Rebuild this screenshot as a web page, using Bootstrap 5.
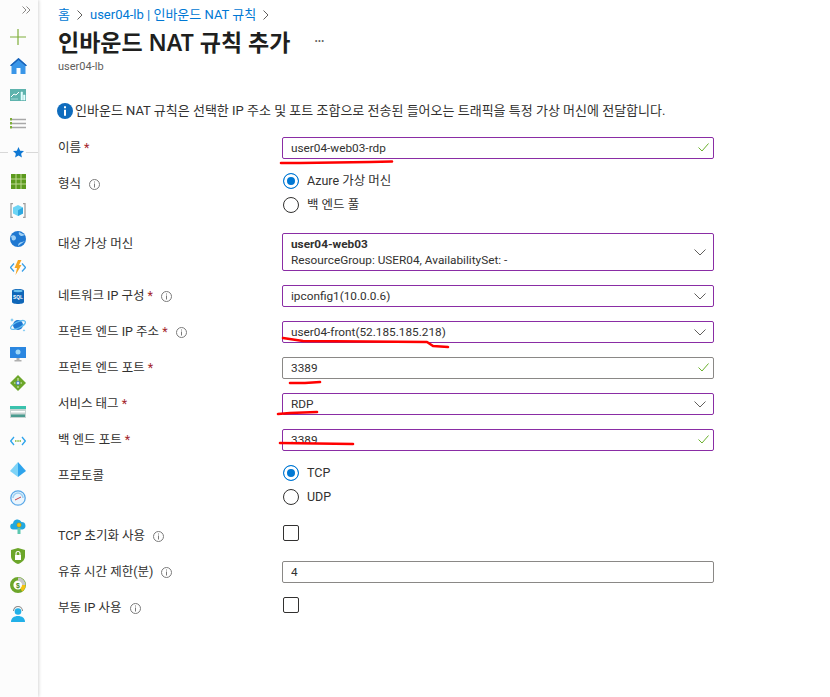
<!DOCTYPE html>
<html lang="ko">
  <head>
    <meta charset="UTF-8" />
    <title>인바운드 NAT 규칙 추가</title>
    <link href="https://cdn.jsdelivr.net/npm/bootstrap@5.3.0/dist/css/bootstrap.min.css" rel="stylesheet" />
    <style>
      body {
        background: #fff;
        color: #323130;
        font-family: Roboto, "Noto Sans CJK KR", sans-serif;
        font-size: 12.5px;
        overflow: hidden;
      }
      .page-wrap { height: 697px; }
      .side-rail {
        width: 38px;
        flex: none;
        background: #fcfcfc;
        box-shadow: 1px 0 3px rgba(0, 0, 0, 0.16);
        padding-right: 2px;
      }
      .rail-top { height: 23px; width: 100%; padding: 0 0 3px 16px; }
      .rail-item { height: 28.8px; }
      .rail-sep { position: relative; }
      .rail-sep::before, .rail-sep::after {
        content: "";
        position: absolute;
        top: 14px;
        height: 1px;
        width: 8px;
        background: #d8d8d8;
      }
      .rail-sep::before { left: 0; }
      .rail-sep::after { right: -2px; width: 12px; }
      .main-pane { padding: 6px 0 0 20px; width: 676px; }
      .crumbs { height: 17px; line-height: 17px; color: #0078d4; font-size: 13px; }
      .crumbs svg { margin: 0 7px; }
      .page-title {
        font-size: 23px;
        font-weight: 600;
        line-height: 30px;
        margin: 4px 0 0;
        color: #201f1e;
        font-family: "Noto Sans", "Noto Sans CJK KR", sans-serif;
      }
      .more-dots { color: #605e5c; margin-left: 24px; font-size: 12px; letter-spacing: 0; }
      .sub-title { font-size: 11px; color: #605e5c; line-height: 15px; margin-top: 2px; }
      .info-line { margin: 28px 0 17px -1px; height: 18px; font-size: 13px; gap: 2px; }
      .form-line { display: flex; margin-bottom: 14px; }
      .form-line.tight { margin-bottom: 10px; }
      .form-line.loose { margin-bottom: 16px; }
      .line-label { width: 224px; flex: none; line-height: 22px; }
      .line-label.pushed { padding-top: 4px; }
      .line-label.top-set { line-height: 21px; padding-top: 0; }
      .req { color: #a4262c; }
      .tip-icon { margin-left: 5px; vertical-align: -2px; }
      .line-ctl { width: 432px; flex: none; position: relative; }
      .az-input.form-control, .az-select.form-select {
        height: 22px;
        min-height: 0;
        border-radius: 2px;
        border: 1px solid #8a2da5;
        font-size: 11.8px;
        color: #323130;
        padding: 0 8px;
        line-height: 20px;
        box-shadow: none;
      }
      .az-input.plain { border-color: #8a8886; }
      .az-select.form-select {
        background-image: url("data:image/svg+xml,%3Csvg xmlns='http://www.w3.org/2000/svg' width='12' height='7' viewBox='0 0 12 7'%3E%3Cpath d='M.5.5 6 6 11.5.5' fill='none' stroke='%23605e5c'/%3E%3C/svg%3E");
        background-position: right 7px center;
        background-size: 12px 7px;
      }
      .az-select.tall { height: 38px; line-height: 16px; padding-top: 2px; padding-bottom: 2px; }
      .ok-tick { position: absolute; right: 5px; top: 6px; }
      .radio-row { height: 24px; margin: 0; padding: 0; gap: 8px; }
      .az-radio.form-check-input, .az-check.form-check-input {
        width: 16px;
        height: 16px;
        margin: 0 0 0 1px;
        float: none;
        border: 1px solid #323130;
        background-color: #fff;
        flex: none;
      }
      .az-radio.form-check-input:checked[type="radio"] {
        background-image: none;
        background-color: #0078d4;
        border-color: #0078d4;
        box-shadow: inset 0 0 0 3px #fff;
      }
      .az-check.form-check-input { border-radius: 2px; margin-top: 0; display: block; }
      .ink-layer { position: absolute; left: 0; top: 0; pointer-events: none; }
    </style>
  </head>
  <body>
    <div class="page-wrap d-flex position-relative">
      <nav class="side-rail d-flex flex-column align-items-center">
        <div class="rail-top d-flex align-items-center justify-content-center">
          <svg width="9" height="8" viewBox="0 0 9 8" fill="none" stroke="#8a8886"><path d="M.5.5 4 4 .5 7.500M4.500.5 8 4 4.500 7.500" /></svg>
        </div>
        <div class="rail-item d-flex align-items-center justify-content-center">
          <svg width="16" height="16" viewBox="0 0 16 16"><path d="M8 0v16M0 8h16" stroke="#7fae3a" stroke-width="1.200" /></svg>
        </div>
        <div class="rail-item d-flex align-items-center justify-content-center">
          <svg width="17" height="16" viewBox="0 0 17 16"><path d="M8.500 0 17 7.500 15.500 8v8h-14V8L0 7.500z" fill="#3a96e8" /><path d="M8.500 0 17 7.500l-1.500.5-7-6-7 6L0 7.500z" fill="#1a62b8" /><path d="M6.500 10h4v6h-4z" fill="#fff" /></svg>
        </div>
        <div class="rail-item d-flex align-items-center justify-content-center">
          <svg width="16" height="12" viewBox="0 0 16 12"><path d="M0 0h16v12H0z" fill="#5eb3ad" /><path d="M1 8l3-3 2 1 3-3" fill="none" stroke="#fff" /><path d="M1 10h7M11 3h1.500v8H11zM13.500 6H15v5h-1.500z" fill="#dff" stroke="#eff" stroke-width=".5" /></svg>
        </div>
        <div class="rail-item d-flex align-items-center justify-content-center">
          <svg width="16" height="11" viewBox="0 0 16 11"><path d="M2 1.500h14M2 5.500h14M2 9.500h14" stroke="#a8a8a8" stroke-width="1.400" /><path d="M0 0h2v2.500H0zM0 4h2v2.500H0zM0 8h2v2.500H0z" fill="#7fae3a" /></svg>
        </div>
        <div class="rail-item rail-sep w-100 d-flex align-items-center justify-content-center">
          <svg width="11" height="11" viewBox="0 0 24 24"><path d="M12 0l3.600 8 8.400.9-6.300 5.700L19.500 23 12 18.700 4.500 23l1.800-8.400L0 8.900 8.400 8z" fill="#0f78d4" /></svg>
        </div>
        <div class="rail-item d-flex align-items-center justify-content-center">
          <svg width="15" height="15" viewBox="0 0 15 15"><path d="M0 0h15v15H0z" fill="#5c9a1e" /><path d="M0 5h15M0 10h15M5 0v15M10 0v15" stroke="#bcd890" /></svg>
        </div>
        <div class="rail-item d-flex align-items-center justify-content-center">
          <svg width="16" height="15" viewBox="0 0 16 15"><path d="M3 .7H1v13.600h2M13 .7h2v13.600h-2" fill="none" stroke="#a0a0a0" stroke-width="1.300" /><path d="M8 2l5 2.500v6L8 13l-5-2.500v-6z" fill="#6cd4f5" /><path d="M8 7.200V13l5-2.500v-6z" fill="#2ea8e0" /></svg>
        </div>
        <div class="rail-item d-flex align-items-center justify-content-center">
          <svg width="16" height="16" viewBox="0 0 16 16"><circle cx="8" cy="8" r="8" fill="#1f78d1" /><path d="M1 5c3-2 5 0 5 2s-2 3-4 2M9 1c-1 2 1 4 3 4l3-1M8 15c0-3 2-4 4-4l3-1" fill="#9fd0f5" /></svg>
        </div>
        <div class="rail-item d-flex align-items-center justify-content-center">
          <svg width="16" height="15" viewBox="0 0 16 15"><path d="M4 3.500 .5 7.500 4 11.500M12 3.500l3.500 4-3.500 4" fill="none" stroke="#3aa0e8" stroke-width="1.300" /><path d="M8 0h3.500L9 5h2.500l-6 10L7 8H4.500z" fill="#f5a623" /></svg>
        </div>
        <div class="rail-item d-flex align-items-center justify-content-center">
          <svg width="12" height="15" viewBox="0 0 12 15"><path d="M0 2c0-2.600 12-2.600 12 0v11c0 2.600-12 2.600-12 0z" fill="#0f66b8" /><ellipse cx="6" cy="2" rx="4.600" ry="1.200" fill="#6cc0ee" /><text x="6" y="10" text-anchor="middle" font-size="4.800" font-weight="700" fill="#fff" font-family="Liberation Sans, sans-serif">SQL</text></svg>
        </div>
        <div class="rail-item d-flex align-items-center justify-content-center">
          <svg width="16" height="16" viewBox="0 0 16 16"><circle cx="8" cy="8" r="5" fill="#1f78d1" /><ellipse cx="8" cy="8" rx="8" ry="3" fill="none" stroke="#62bdf0" stroke-width="1.200" transform="rotate(-25 8 8)" /><path d="M2 1l.6 1.400L4 3l-1.400.6L2 5l-.6-1.400L0 3l1.400-.6zM14 12l.4 1 1 .4-1 .4-.4 1-.4-1-1-.4 1-.4z" fill="#62bdf0" /></svg>
        </div>
        <div class="rail-item d-flex align-items-center justify-content-center">
          <svg width="16" height="15" viewBox="0 0 16 15"><path d="M0 0h16v11H0z" fill="#2a86e0" /><circle cx="8" cy="5" r="2.500" fill="#9fd8f8" /><path d="M6.500 11h3v2h-3zM4.500 13h7v1.500h-7z" fill="#b0b0b0" /></svg>
        </div>
        <div class="rail-item d-flex align-items-center justify-content-center">
          <svg width="16" height="16" viewBox="0 0 16 16"><path d="M8 0l8 8-8 8-8-8z" fill="#6ca62a" /><path d="M8 3v7" stroke="#dff0c8" /><circle cx="8" cy="8" r="1.800" fill="#cfe4ff" stroke="#2a66c0" stroke-width=".7" /><path d="M4 8h1.500M10.500 8H12M8 11v2" stroke="#dff0c8" /></svg>
        </div>
        <div class="rail-item d-flex align-items-center justify-content-center">
          <svg width="16" height="12" viewBox="0 0 16 12"><path d="M0 0h16v3H0z" fill="#3ac2ad" /><path d="M0 3h16v9H0z" fill="#c8d4d2" /><path d="M1 5h14v1.500H1z" fill="#fff" /><path d="M1 8.500h14V11H1z" fill="#4a9c90" /></svg>
        </div>
        <div class="rail-item d-flex align-items-center justify-content-center">
          <svg width="16" height="10" viewBox="0 0 16 10"><path d="M4 1 .7 5 4 9M12 1l3.300 4L12 9" fill="none" stroke="#2ea4ec" stroke-width="1.300" /><path d="M5 4.200h1.500v1.600H5zM7.300 4.200h1.500v1.600H7.300zM9.500 4.200H11v1.600H9.500z" fill="#7fb83a" /></svg>
        </div>
        <div class="rail-item d-flex align-items-center justify-content-center">
          <svg width="16" height="15" viewBox="0 0 16 15"><path d="M8 0 0 9l8 6z" fill="#7ed3f7" /><path d="M8 0l8 9-8 6z" fill="#2ea4ec" /></svg>
        </div>
        <div class="rail-item d-flex align-items-center justify-content-center">
          <svg width="16" height="16" viewBox="0 0 16 16"><circle cx="8" cy="8" r="7.200" fill="#eaf5fd" stroke="#5aa8e8" stroke-width="1.300" /><path d="M3 8a5 5 0 0 1 10 0" fill="none" stroke="#9ccff2" stroke-width="1.500" /><path d="M5 10l6-3" stroke="#c8404a" /></svg>
        </div>
        <div class="rail-item d-flex align-items-center justify-content-center">
          <svg width="16" height="15" viewBox="0 0 16 15"><path d="M3.500 10.500a3 3 0 0 1-.5-6 4.500 4.500 0 0 1 8.500-1.500 3.800 3.800 0 0 1 1 7.500z" fill="#22a8e0" /><circle cx="9" cy="6" r="2.200" fill="#f5c211" stroke="#a08a20" stroke-width=".5" /><path d="M7.500 9h3v6h-3z" fill="#5cc8b0" /></svg>
        </div>
        <div class="rail-item d-flex align-items-center justify-content-center">
          <svg width="14" height="16" viewBox="0 0 14 16"><path d="M7 0l7 2v6c0 4-3 6.500-7 8-4-1.500-7-4-7-8V2z" fill="#6ca62a" /><path d="M4 7h6v5H4z" fill="#fff" /><path d="M5 7V5.500a2 2 0 0 1 4 0V7" fill="none" stroke="#fff" stroke-width="1.100" /></svg>
        </div>
        <div class="rail-item d-flex align-items-center justify-content-center">
          <svg width="16" height="16" viewBox="0 0 16 16"><circle cx="8" cy="8" r="6.300" fill="#fff" stroke="#6ca62a" stroke-width="3.400" /><path d="M8 .5A7.500 7.500 0 0 1 15.500 8H12a4 4 0 0 0-4-4z" fill="#c8c8c8" /><path d="M15.500 8A7.500 7.500 0 0 1 12 14.500L10.500 11a4 4 0 0 0 1.500-3z" fill="#f5c211" /><text x="8" y="10.500" text-anchor="middle" font-size="7" font-weight="700" fill="#4a8a20" font-family="Liberation Sans, sans-serif">$</text></svg>
        </div>
        <div class="rail-item d-flex align-items-center justify-content-center">
          <svg width="14" height="17" viewBox="0 0 14 17"><path d="M2.500 6a4.500 4.500 0 0 1 9 0" fill="none" stroke="#8a8a8a" stroke-width="1.100" /><circle cx="7" cy="6.500" r="3.300" fill="#22b0e8" /><path d="M0 17c0-4 3-6 7-6s7 2 7 6z" fill="#22b0e8" /></svg>
        </div>
      </nav>

      <main class="main-pane">
        <div class="crumbs d-flex align-items-center">
          <span>홈</span>
          <svg width="6" height="10" viewBox="0 0 6 10" fill="none" stroke="#605e5c"><path d="M.5.500 5 5 .5 9.500" /></svg>
          <span>user04-lb | 인바운드 NAT 규칙</span>
          <svg width="6" height="10" viewBox="0 0 6 10" fill="none" stroke="#605e5c"><path d="M.5.500 5 5 .5 9.500" /></svg>
        </div>
        <h1 class="page-title d-flex align-items-center">인바운드 NAT 규칙 추가<span class="more-dots">···</span></h1>
        <div class="sub-title">user04-lb</div>

        <div class="info-line d-flex align-items-center">
          <svg width="16" height="16" viewBox="0 0 16 16"><circle cx="8" cy="8" r="8" fill="#0f6cbd" /><path d="M7 3.200h2v2H7zM7 6.800h2v6H7z" fill="#fff" /></svg>
          <span>인바운드 NAT 규칙은 선택한 IP 주소 및 포트 조합으로 전송된 들어오는 트래픽을 특정 가상 머신에 전달합니다.</span>
        </div>

        <form>
          <div class="form-line tight">
            <label class="line-label">이름 <span class="req">*</span></label>
            <div class="line-ctl">
              <input class="form-control az-input" type="text" value="user04-web03-rdp" />
              <svg class="ok-tick" width="11" height="9" viewBox="0 0 11 9" fill="none" stroke="#6bb02e"><path d="M.5 4.500 4 8l6.500-7.500" /></svg>
            </div>
          </div>

          <div class="form-line loose">
            <label class="line-label pushed">형식
              <svg class="tip-icon" width="11" height="11" viewBox="0 0 11 11"><circle cx="5.500" cy="5.500" r="5" fill="none" stroke="#7a7a7a" /><path d="M5.500 2.500v1M5.500 4.500v4" stroke="#7a7a7a" /></svg>
            </label>
            <div class="line-ctl">
              <div class="form-check radio-row d-flex align-items-center">
                <input class="form-check-input az-radio" type="radio" name="kind" id="kindVm" checked />
                <label class="form-check-label" for="kindVm">Azure 가상 머신</label>
              </div>
              <div class="form-check radio-row d-flex align-items-center">
                <input class="form-check-input az-radio" type="radio" name="kind" id="kindPool" />
                <label class="form-check-label" for="kindPool">백 엔드 풀</label>
              </div>
            </div>
          </div>

          <div class="form-line">
            <label class="line-label top-set">대상 가상 머신</label>
            <div class="line-ctl">
              <div class="form-select az-select tall">
                <div class="fw-bold">user04-web03</div>
                <div>ResourceGroup: USER04, AvailabilitySet: -</div>
              </div>
            </div>
          </div>

          <div class="form-line">
            <label class="line-label">네트워크 IP 구성 <span class="req">*</span>
              <svg class="tip-icon" width="11" height="11" viewBox="0 0 11 11"><circle cx="5.500" cy="5.500" r="5" fill="none" stroke="#7a7a7a" /><path d="M5.500 2.500v1M5.500 4.500v4" stroke="#7a7a7a" /></svg>
            </label>
            <div class="line-ctl"><div class="form-select az-select">ipconfig1(10.0.0.6)</div></div>
          </div>

          <div class="form-line">
            <label class="line-label">프런트 엔드 IP 주소 <span class="req">*</span>
              <svg class="tip-icon" width="11" height="11" viewBox="0 0 11 11"><circle cx="5.500" cy="5.500" r="5" fill="none" stroke="#7a7a7a" /><path d="M5.500 2.500v1M5.500 4.500v4" stroke="#7a7a7a" /></svg>
            </label>
            <div class="line-ctl"><div class="form-select az-select">user04-front(52.185.185.218)</div></div>
          </div>

          <div class="form-line">
            <label class="line-label">프런트 엔드 포트 <span class="req">*</span></label>
            <div class="line-ctl">
              <input class="form-control az-input plain" type="text" value="3389" />
              <svg class="ok-tick" width="11" height="9" viewBox="0 0 11 9" fill="none" stroke="#6bb02e"><path d="M.5 4.500 4 8l6.500-7.500" /></svg>
            </div>
          </div>

          <div class="form-line">
            <label class="line-label">서비스 태그 <span class="req">*</span></label>
            <div class="line-ctl"><div class="form-select az-select">RDP</div></div>
          </div>

          <div class="form-line tight">
            <label class="line-label">백 엔드 포트 <span class="req">*</span></label>
            <div class="line-ctl">
              <input class="form-control az-input" type="text" value="3389" />
              <svg class="ok-tick" width="11" height="9" viewBox="0 0 11 9" fill="none" stroke="#6bb02e"><path d="M.5 4.500 4 8l6.500-7.500" /></svg>
            </div>
          </div>

          <div class="form-line loose">
            <label class="line-label pushed">프로토콜</label>
            <div class="line-ctl">
              <div class="form-check radio-row d-flex align-items-center">
                <input class="form-check-input az-radio" type="radio" name="proto" id="protoTcp" checked />
                <label class="form-check-label" for="protoTcp">TCP</label>
              </div>
              <div class="form-check radio-row d-flex align-items-center">
                <input class="form-check-input az-radio" type="radio" name="proto" id="protoUdp" />
                <label class="form-check-label" for="protoUdp">UDP</label>
              </div>
            </div>
          </div>

          <div class="form-line">
            <label class="line-label">TCP 초기화 사용
              <svg class="tip-icon" width="11" height="11" viewBox="0 0 11 11"><circle cx="5.500" cy="5.500" r="5" fill="none" stroke="#7a7a7a" /><path d="M5.500 2.500v1M5.500 4.500v4" stroke="#7a7a7a" /></svg>
            </label>
            <div class="line-ctl"><input class="form-check-input az-check" type="checkbox" /></div>
          </div>

          <div class="form-line">
            <label class="line-label">유휴 시간 제한(분)
              <svg class="tip-icon" width="11" height="11" viewBox="0 0 11 11"><circle cx="5.500" cy="5.500" r="5" fill="none" stroke="#7a7a7a" /><path d="M5.500 2.500v1M5.500 4.500v4" stroke="#7a7a7a" /></svg>
            </label>
            <div class="line-ctl"><input class="form-control az-input plain" type="text" value="4" /></div>
          </div>

          <div class="form-line">
            <label class="line-label">부동 IP 사용
              <svg class="tip-icon" width="11" height="11" viewBox="0 0 11 11"><circle cx="5.500" cy="5.500" r="5" fill="none" stroke="#7a7a7a" /><path d="M5.500 2.500v1M5.500 4.500v4" stroke="#7a7a7a" /></svg>
            </label>
            <div class="line-ctl"><input class="form-check-input az-check" type="checkbox" /></div>
          </div>
        </form>
      </main>

      <!-- red pen marks drawn on top of the screenshot -->
      <svg class="ink-layer" width="830" height="697" fill="none" stroke="#f00" stroke-width="2.600" stroke-linecap="round" stroke-linejoin="round">
        <path d="M281 163 300 163 370 162 392 161.500" />
        <path d="M283 338 303 341 427 342 433 346 448 347" />
        <path d="M290 383 305 383 320 382" />
        <path d="M278 414 290 413 317 412" />
        <path d="M280 443 353 444" />
      </svg>
    </div>
  </body>
</html>
